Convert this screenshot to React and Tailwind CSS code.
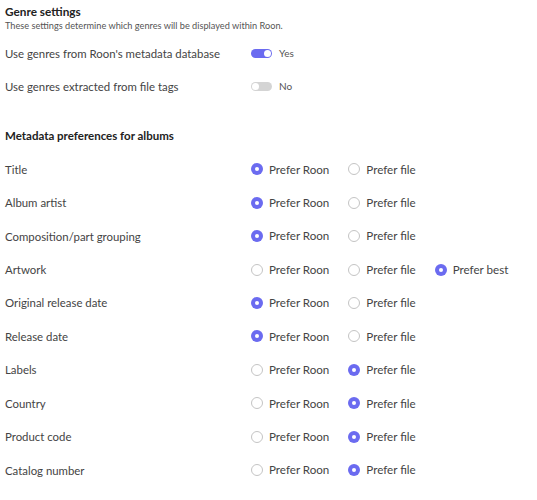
import React from 'react';

const rows = [
  { label: 'Title', value: 'roon' },
  { label: 'Album artist', value: 'roon' },
  { label: 'Composition/part grouping', value: 'roon' },
  { label: 'Artwork', value: 'best', best: true },
  { label: 'Original release date', value: 'roon' },
  { label: 'Release date', value: 'roon' },
  { label: 'Labels', value: 'file' },
  { label: 'Country', value: 'file' },
  { label: 'Product code', value: 'file' },
  { label: 'Catalog number', value: 'file' },
];

function Radio({ checked, label }) {
  return (
    <div className="flex items-center gap-[6px]">
      {checked ? (
        <span className="w-[12px] h-[12px] rounded-full bg-[#6b6bf0] flex items-center justify-center">
          <span className="w-[4px] h-[4px] rounded-full bg-white" />
        </span>
      ) : (
        <span className="w-[12px] h-[12px] rounded-full border border-[#c4c4c4] bg-white" />
      )}
      <span className="text-[11.6px] text-[#444]">{label}</span>
    </div>
  );
}

function Toggle({ on, label }) {
  return (
    <div className="flex items-center gap-[7px]">
      <span
        className={`w-[21px] h-[9px] rounded-full flex items-center px-[1px] ${
          on ? 'bg-[#6b6bf0] justify-end' : 'bg-[#d4d4d4] justify-start'
        }`}
      >
        <span className="w-[7px] h-[7px] rounded-full bg-white" />
      </span>
      <span className="text-[10px] text-[#555]">{label}</span>
    </div>
  );
}

export default function App() {
  return (
    <div className="w-[537px] h-[500px] bg-white overflow-hidden pl-[5px] pt-[4px] text-[#333]" style={{ fontFamily: 'Lato, "Noto Sans", sans-serif' }}>
      <div className="text-[11.8px] leading-[16px] font-bold text-[#222]">Genre settings</div>
      <div className="text-[9.2px] leading-[12px] text-[#555]">
        These settings determine which genres will be displayed within Roon.
      </div>

      <div className="mt-[5px]">
        {[
          { label: "Use genres from Roon's metadata database", on: true, text: 'Yes' },
          { label: 'Use genres extracted from file tags', on: false, text: 'No' },
        ].map(r => (
          <div key={r.label} className="h-[33px] flex items-center">
            <div className="w-[246px] text-[11.4px] text-[#444]">{r.label}</div>
            <Toggle on={r.on} label={r.text} />
          </div>
        ))}
      </div>

      <div className="mt-[25px] text-[11.5px] leading-[16px] font-bold text-[#222]">
        Metadata preferences for albums
      </div>

      <div className="mt-[8.5px]">
        {rows.map(r => (
          <div key={r.label} className="h-[33.45px] flex items-center">
            <div className="w-[246px] text-[11.4px] text-[#444]">{r.label}</div>
            <div className="flex items-center gap-[19px]">
              <Radio checked={r.value === 'roon'} label="Prefer Roon" />
              <Radio checked={r.value === 'file'} label="Prefer file" />
              {r.best && <Radio checked={r.value === 'best'} label="Prefer best" />}
            </div>
          </div>
        ))}
      </div>
    </div>
  );
}
